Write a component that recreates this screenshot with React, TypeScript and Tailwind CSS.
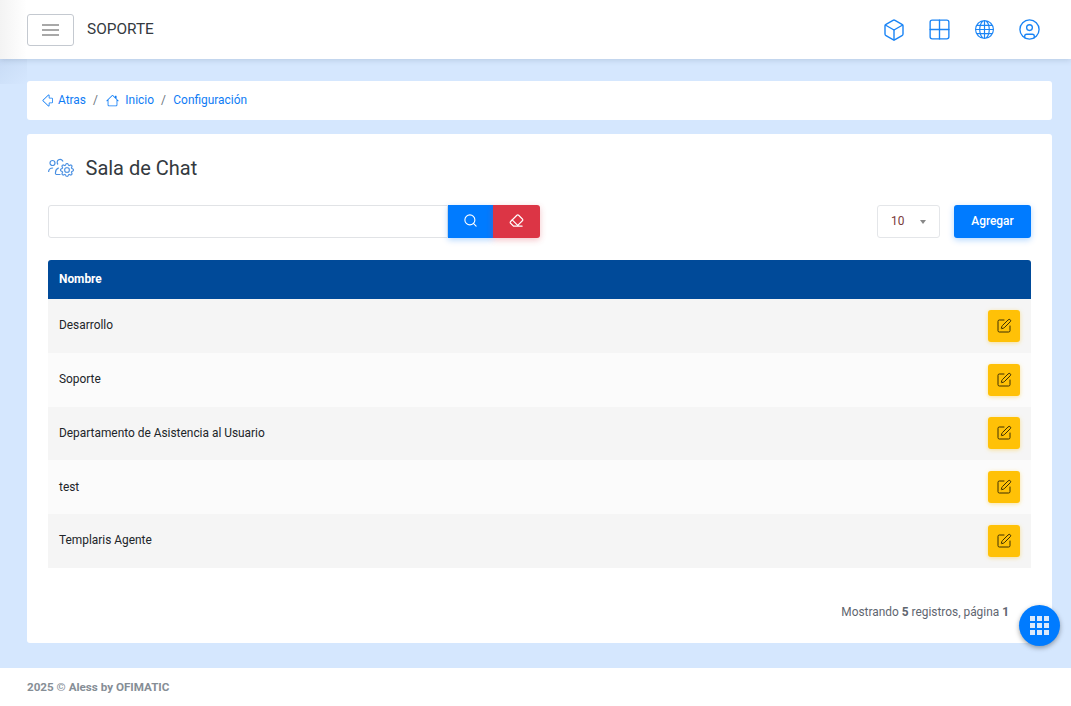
import { BsGear, BsGlobe, BsHouse, BsShift } from "react-icons/bs";
import { Box, CircleUser, Eraser, Grid2x2, Search, SquarePen } from "lucide-react";

const rows = ["Desarrollo", "Soporte", "Departamento de Asistencia al Usuario", "test", "Templaris Agente"];

function GridDots() {
  const pos = [0, 7, 14];
  return (
    <svg width="19" height="19" viewBox="0 0 19 19" fill="#dbe9fb">
      {pos.map((y) => pos.map((x) => <rect key={`${x}-${y}`} x={x} y={y} width="5" height="5" />))}
    </svg>
  );
}

function PeopleGear() {
  return (
    <span className="relative block h-[20px] w-[26px] text-[#4a90e2]">
      <svg width="26" height="20" viewBox="0 0 26 20" fill="none" stroke="currentColor" strokeWidth="1.2">
        <circle cx="4.5" cy="5" r="2.5" />
        <path d="M0.6 14c0-2.5 2-4 4.5-4" />
        <path d="M10 6.5a3 3 0 1 1 5 -3" />
        <path d="M7.5 16v-1.5c0-2.2 1.3-3.8 3.2-4.6M7.5 16.5h5" />
      </svg>
      <BsGear className="absolute bottom-[1px] right-0 stroke-[0.3px] text-[14px]" />
    </span>
  );
}

export default function App() {
  return (
    <div className="relative flex h-[706px] flex-col overflow-hidden bg-[#d5e7fe] font-['Roboto',sans-serif] text-[11.9px] text-[#212529]">
      {/* Top bar */}
      <header className="z-10 flex h-[59px] shrink-0 items-center justify-between bg-white pl-[27px] pr-[32px] shadow-[0_1px_6px_rgba(60,80,110,0.2)]">
        <div className="flex items-center">
          <button className="flex h-[32px] w-[47px] items-center justify-center rounded-[3px] border border-[#c4c9d0]">
            <span className="flex w-[17px] flex-col gap-[3px]">
              <span className="h-[2px] bg-[#a8a8a8]" />
              <span className="h-[2px] bg-[#a8a8a8]" />
              <span className="h-[2px] bg-[#a8a8a8]" />
            </span>
          </button>
          <span className="ml-[13px] mt-[1px] text-[15.4px] text-[#343a40]">SOPORTE</span>
        </div>
        <div className="flex items-center gap-[25px] text-[#1a84f5]">
          <span className="flex w-[20px] justify-center"><Box className="shrink-0" size={24} strokeWidth={1.4} /></span>
          <span className="flex w-[20px] justify-center"><Grid2x2 className="shrink-0" size={25} strokeWidth={1.3} /></span>
          <span className="flex w-[20px] justify-center"><BsGlobe className="shrink-0" size={19} /></span>
          <span className="flex w-[20px] justify-center"><CircleUser className="shrink-0" size={23} strokeWidth={1.4} /></span>
        </div>
      </header>

      {/* Shade of the collapsed sidebar */}
      <div className="pointer-events-none absolute left-0 top-0 z-20 h-[59px] w-[27px] bg-gradient-to-r from-[rgba(90,90,90,0.07)] to-transparent" />
      <div className="pointer-events-none absolute left-0 top-[59px] z-0 h-[25px] w-[27px] bg-gradient-to-br from-[rgba(90,120,170,0.1)] to-transparent" />

      <main className="flex flex-1 flex-col gap-[14px] pl-[27px] pr-[19px] pt-[22px]">
        {/* Breadcrumb */}
        <nav className="z-10 flex h-[39px] items-center rounded-[3px] bg-white pl-[14px] text-[#0f7cf5]">
          <BsShift className="-rotate-90 text-[13px]" />
          <span className="ml-[4px]">Atras</span>
          <span className="ml-[7px] mr-[8px] text-[#6c757d]">/</span>
          <BsHouse className="text-[13px]" />
          <span className="ml-[6.5px]">Inicio</span>
          <span className="ml-[7px] mr-[7.5px] text-[#6c757d]">/</span>
          <span>Configuración</span>
        </nav>

        {/* Card */}
        <section className="flex h-[509px] flex-col rounded-[3px] bg-white px-[21px]">
          <div className="flex h-[71px] items-center pb-[4px]">
            <PeopleGear />
            <h1 className="ml-[11.5px] text-[20px] text-[#343a40]">Sala de Chat</h1>
          </div>

          <div className="flex h-[33px] items-stretch justify-between">
            <div className="flex">
              <input className="w-[400px] rounded-l-[3px] border border-[#e1e3e6]" />
              <button className="flex w-[45px] items-center justify-center bg-[#007bff] pb-[2px] text-white shadow-[0_2px_6px_rgba(0,123,255,0.3)]">
                <Search size={15} strokeWidth={1.75} />
              </button>
              <button className="flex w-[47px] items-center justify-center rounded-r-[3px] bg-[#dc3545] pb-[2px] text-white shadow-[0_2px_6px_rgba(220,53,69,0.3)]">
                <Eraser size={15} strokeWidth={1.75} />
              </button>
            </div>
            <div className="flex">
              <div className="flex w-[63px] items-center justify-between rounded-[3px] border border-[#e4e6e9] pl-[13px] pr-[13px] text-[#7a3b3b]">
                <span>10</span>
                <span className="mt-[1px] h-0 w-0 border-x-[3.5px] border-t-[4px] border-x-transparent border-t-[#888]" />
              </div>
              <button className="ml-[14px] w-[77px] rounded-[3px] bg-[#007bff] font-medium text-white shadow-[0_2px_6px_rgba(0,123,255,0.3)]">
                Agregar
              </button>
            </div>
          </div>

          {/* Table */}
          <div className="mt-[22px]">
            <div className="flex h-[39px] items-center rounded-t-[3px] bg-[#004a99] px-[11px] pt-[1px] font-bold text-white">Nombre</div>
            {rows.map((name, i) => (
              <div
                key={name}
                className={`flex h-[53.8px] items-center justify-between px-[11px] text-[#212529] ${i % 2 === 0 ? "bg-[#f5f5f5]" : "bg-[#fbfbfb]"}`}
              >
                <span className="pt-[0.6px]">{name}</span>
                <button className="flex h-[32px] w-[32px] items-center justify-center rounded-[3px] bg-[#ffc107] text-[#3a2e05] shadow-[0_1px_4px_rgba(255,193,7,0.4)]">
                  <SquarePen size={16} strokeWidth={1.5} />
                </button>
              </div>
            ))}
          </div>

          <div className="mt-[36px] pr-[22px] text-right text-[#5f6670]">
            Mostrando <b>5</b> registros, página <b>1</b>
          </div>
        </section>
      </main>

      <footer className="flex h-[38px] shrink-0 items-center bg-white pl-[27px] text-[11.65px] font-bold text-[#868e96]">
        <span className="mt-[1px]">2025 © Aless by OFIMATIC</span>
      </footer>

      {/* Floating menu */}
      <button className="absolute left-[1019px] top-[605px] flex h-[41px] w-[41px] items-center justify-center rounded-full bg-[#007bff] shadow-[0_2px_5px_rgba(0,0,0,0.35)]">
        <GridDots />
      </button>
    </div>
  );
}
